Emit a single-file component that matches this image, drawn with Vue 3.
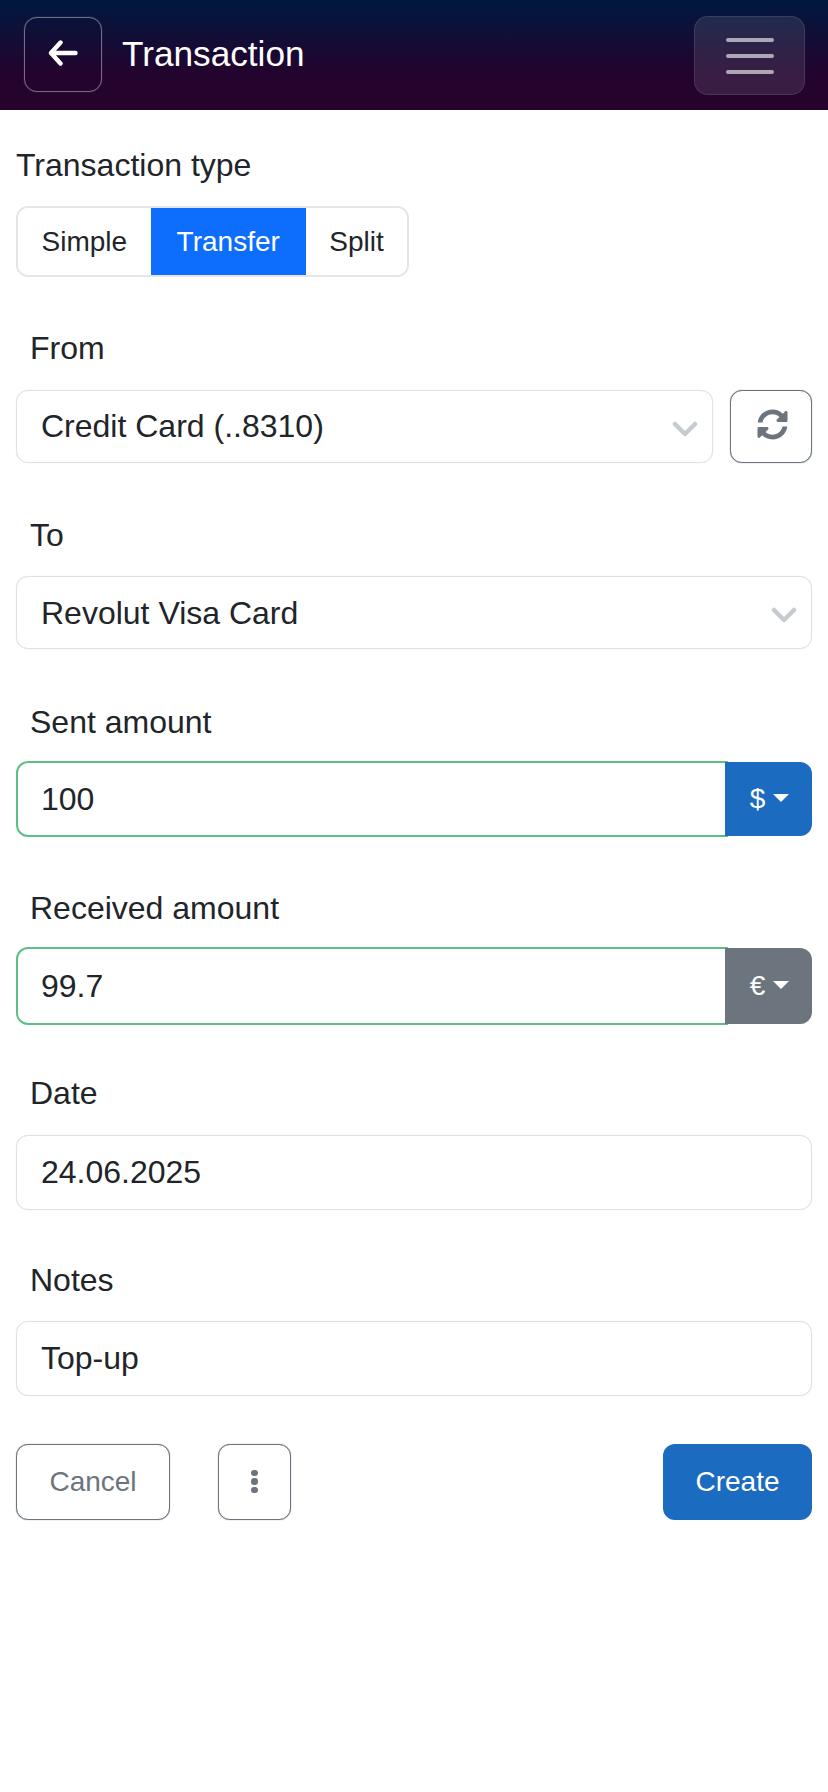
<template>
  <div class="page">
    <header class="topbar">
      <button class="back-btn" type="button" aria-label="Back">
        <svg width="30" height="26" viewBox="0 0 30 26" fill="none" stroke="#fff" stroke-width="4.4" stroke-linecap="round" stroke-linejoin="round">
          <path d="M27.5 13H3.5" />
          <path d="M12.5 2.5 3 13l9.5 10.5" />
        </svg>
      </button>
      <h1 class="title">Transaction</h1>
      <button class="menu-btn" type="button" aria-label="Menu">
        <span v-for="n in 3" :key="n" class="menu-bar"></span>
      </button>
    </header>

    <main class="content">
      <div class="type-label">Transaction type</div>
      <div class="type-group">
        <button
          v-for="t in types"
          :key="t"
          type="button"
          class="type-btn"
          :class="{ active: t === activeType }"
          @click="activeType = t"
        >{{ t }}</button>
      </div>

      <div class="field">
        <label class="field-label">From</label>
        <div class="row">
          <div class="select-wrap">
            <select v-model="from" class="control">
              <option>Credit Card (..8310)</option>
              <option>Revolut Visa Card</option>
            </select>
            <svg class="chevron" width="26" height="16" viewBox="0 0 26 16" fill="none" stroke="#c6cad1" stroke-width="4.5" stroke-linecap="round" stroke-linejoin="round">
              <path d="M3 3l10 10L23 3" />
            </svg>
          </div>
          <button class="refresh-btn" type="button" aria-label="Refresh">
            <svg width="31" height="31" viewBox="0 0 512 512" fill="#6c757d">
              <path d="M370.72 133.28C339.458 104.008 298.888 87.962 255.848 88c-77.458.068-144.328 53.178-162.791 126.85-1.344 5.363-6.122 9.15-11.651 9.15H24.103c-7.498 0-13.194-6.807-11.807-14.176C33.933 94.924 134.813 8 256 8c66.448 0 126.791 26.136 171.315 68.685L463.03 40.97C478.149 25.851 504 36.559 504 57.941V192c0 13.255-10.745 24-24 24H345.941c-21.382 0-32.09-25.851-16.971-40.971l41.75-41.749zM32 296h134.059c21.382 0 32.09 25.851 16.971 40.971l-41.75 41.75c31.262 29.273 71.835 45.319 114.876 45.28 77.418-.07 144.315-53.144 162.787-126.849 1.344-5.363 6.122-9.15 11.651-9.15h57.304c7.498 0 13.194 6.807 11.807 14.176C478.067 417.076 377.187 504 256 504c-66.448 0-126.791-26.136-171.315-68.685L48.97 471.03C33.851 486.149 8 475.441 8 454.059V320c0-13.255 10.745-24 24-24z" />
            </svg>
          </button>
        </div>
      </div>

      <div class="field field--to">
        <label class="field-label">To</label>
        <div class="select-wrap">
          <select v-model="to" class="control">
            <option>Credit Card (..8310)</option>
            <option>Revolut Visa Card</option>
          </select>
          <svg class="chevron" width="26" height="16" viewBox="0 0 26 16" fill="none" stroke="#c6cad1" stroke-width="4.5" stroke-linecap="round" stroke-linejoin="round">
            <path d="M3 3l10 10L23 3" />
          </svg>
        </div>
      </div>

      <div class="field field--amount field--sent">
        <label class="field-label">Sent amount</label>
        <div class="amount-row">
          <input v-model="sent" type="text" class="control control--valid" />
          <button class="currency-btn currency-btn--blue" type="button">$<span class="caret"></span></button>
        </div>
      </div>

      <div class="field field--amount field--received">
        <label class="field-label">Received amount</label>
        <div class="amount-row amount-row--tall">
          <input v-model="received" type="text" class="control control--valid" />
          <button class="currency-btn currency-btn--grey" type="button">€<span class="caret"></span></button>
        </div>
      </div>

      <div class="field field--date">
        <label class="field-label">Date</label>
        <input v-model="date" type="text" class="control control--text" />
      </div>

      <div class="field field--notes">
        <label class="field-label">Notes</label>
        <input v-model="notes" type="text" class="control control--text" />
      </div>

      <div class="actions">
        <button class="btn btn-cancel" type="button">Cancel</button>
        <button class="btn btn-more" type="button" aria-label="More">
          <span v-for="n in 3" :key="n" class="dot"></span>
        </button>
        <button class="btn btn-create" type="button">Create</button>
      </div>
    </main>
  </div>
</template>

<script setup>
import { ref } from 'vue'

const types = ['Simple', 'Transfer', 'Split']
const activeType = ref('Transfer')
const from = ref('Credit Card (..8310)')
const to = ref('Revolut Visa Card')
const sent = ref('100')
const received = ref('99.7')
const date = ref('24.06.2025')
const notes = ref('Top-up')
</script>

<style>
html, body {
  background: #fff;
}
</style>

<style scoped>
.page {
  min-height: 1792px;
  background: #fff;
  color: #212529;
  font-family: "Liberation Sans", Arial, sans-serif;
}

button {
  font-family: inherit;
  cursor: pointer;
}

.topbar {
  height: 110px;
  box-sizing: border-box;
  display: flex;
  align-items: center;
  padding: 0 23px 0 24px;
  background: linear-gradient(180deg, #00183f 0%, #22042e 65%, #27032a 100%);
}

.back-btn {
  width: 78px;
  height: 75px;
  margin-top: -1px;
  display: flex;
  align-items: center;
  justify-content: center;
  background: transparent;
  border: 1px solid rgba(255, 255, 255, 0.4);
  box-shadow: 0 0 1px rgba(255, 255, 255, 0.4);
  border-radius: 13px;
  padding: 0 0 4px;
}

.title {
  margin: 0 0 3px 20px;
  flex: 1;
  font-size: 35.2px;
  font-weight: 400;
  color: #fff;
}

.menu-btn {
  width: 111px;
  height: 79px;
  margin-top: 1px;
  display: flex;
  flex-direction: column;
  align-items: center;
  justify-content: center;
  gap: 12px;
  background: rgba(255, 255, 255, 0.1);
  border: 1px solid rgba(255, 255, 255, 0.1);
  border-radius: 14px;
  padding: 0;
}

.menu-bar {
  width: 48px;
  height: 4px;
  border-radius: 2px;
  background: rgba(255, 255, 255, 0.6);
}

.content {
  padding: 31px 16px 0;
}

.type-label {
  font-size: 32px;
  line-height: 48px;
}

.type-group {
  display: inline-flex;
  margin-top: 17px;
  height: 71px;
  box-sizing: border-box;
  border: 2px solid #e4e6ea;
  border-radius: 12px;
  overflow: hidden;
}

.type-btn {
  padding: 0 23.5px;
  border: 0;
  background: #fff;
  color: #212529;
  font-size: 28px;
}

.type-btn.active {
  background: #0d6efd;
  color: #fff;
  padding: 0 26px;
}

.field {
  margin-top: 47px;
}

.field--to {
  margin-top: 48px;
}

.field--received {
  margin-top: 47px;
}

.field--notes {
  margin-top: 46px;
}

.field--sent {
  margin-top: 49px;
}

.field--date {
  margin-top: 44px;
}

.field--amount .field-label {
  margin-bottom: 15px;
}

.field-label {
  display: block;
  padding-left: 14px;
  margin-bottom: 17.5px;
  font-size: 32px;
  line-height: 48px;
}

.row {
  display: flex;
  gap: 17px;
}

.select-wrap {
  position: relative;
  flex: 1;
}

.control {
  display: block;
  width: 100%;
  height: 73px;
  box-sizing: border-box;
  padding: 0 24px;
  border: 1px solid #dee2e6;
  box-shadow: 0 0 1px #dee2e6;
  border-radius: 12px;
  background: #fff;
  color: #212529;
  font-family: inherit;
  font-size: 32px;
  outline: none;
  appearance: none;
}

.control--text {
  height: 75px;
}

.chevron {
  position: absolute;
  right: 15px;
  top: 31px;
  pointer-events: none;
}

.refresh-btn {
  width: 82px;
  height: 73px;
  display: flex;
  align-items: center;
  justify-content: center;
  flex-shrink: 0;
  background: #fff;
  border: 1px solid #6c757d;
  box-shadow: 0 0 1px #6c757d;
  border-radius: 12px;
  padding: 0 0 3px 2px;
}

.amount-row {
  display: flex;
  height: 76px;
}

.amount-row--tall {
  height: 78px;
}

.control--valid {
  flex: 1;
  min-width: 0;
  height: 100%;
  padding: 0 23px;
  border: 2px solid #5cc084;
  box-shadow: none;
  border-radius: 12px 0 0 12px;
  margin-right: -3px;
}

.currency-btn {
  position: relative;
  width: 87px;
  display: flex;
  align-items: center;
  justify-content: center;
  gap: 8px;
  margin: 1px 0;
  padding: 0 0 0 2px;
  border: 0;
  border-radius: 0 12px 12px 0;
  color: #fff;
  font-size: 28px;
}

.currency-btn--blue {
  background: #1b6bc0;
}

.currency-btn--grey {
  background: #6c757d;
}

.caret {
  width: 0;
  height: 0;
  margin-bottom: 2px;
  border-left: 8px solid transparent;
  border-right: 8px solid transparent;
  border-top: 8px solid #fff;
}

.actions {
  display: flex;
  align-items: stretch;
  margin-top: 48px;
  height: 76px;
}

.btn {
  font-size: 28px;
  border-radius: 12px;
  padding: 0;
}

.btn-cancel {
  width: 154px;
  background: #fff;
  border: 1px solid #6c757d;
  box-shadow: 0 0 1px #6c757d;
  color: #6c757d;
}

.btn-more {
  width: 73px;
  margin-left: 48px;
  display: flex;
  flex-direction: column;
  align-items: center;
  justify-content: center;
  gap: 2px;
  background: #fff;
  border: 1px solid #6c757d;
  box-shadow: 0 0 1px #6c757d;
  padding-bottom: 1px;
}

.dot {
  width: 6.5px;
  height: 6.5px;
  border-radius: 50%;
  background: #6c757d;
}

.btn-create {
  width: 149px;
  margin-left: auto;
  background: #1b6bc0;
  border: 0;
  color: #fff;
}
</style>
